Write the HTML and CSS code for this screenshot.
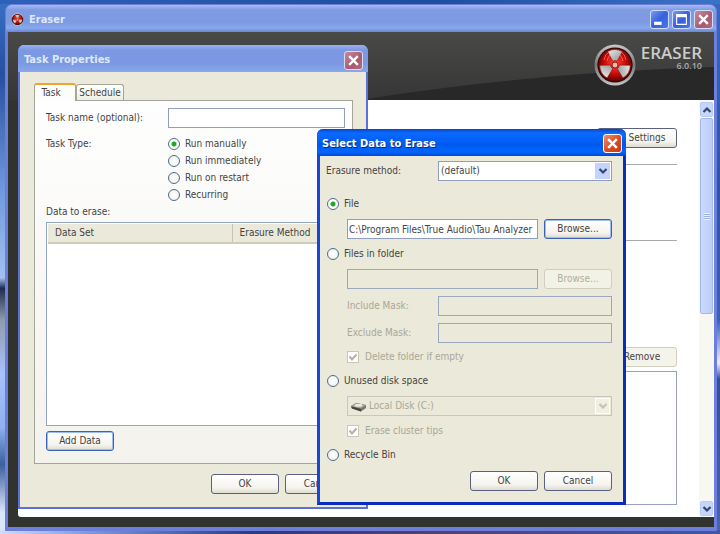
FILE: index.html
```html
<!DOCTYPE html>
<html lang="en">
<head>
<meta charset="utf-8">
<title>Eraser</title>
<link rel="stylesheet" href="styles.css">
</head>
<body>
<svg class="defs" aria-hidden="true">
  <defs>
    <radialGradient id="red" cx="50%" cy="45%" r="55%"><stop offset="0" stop-color="#ff4a35"/><stop offset=".55" stop-color="#d00d0a"/><stop offset="1" stop-color="#5a0000"/></radialGradient>
    <linearGradient id="rim" x1="0" y1="0" x2="0" y2="1"><stop offset="0" stop-color="#c9c9c9"/><stop offset=".5" stop-color="#777"/><stop offset="1" stop-color="#c4c4c4"/></linearGradient>
    <linearGradient id="steel" x1="0" y1="0" x2="1" y2="1"><stop offset="0" stop-color="#f0f0ee"/><stop offset="1" stop-color="#8b8d8b"/></linearGradient>
    <symbol id="emblem" viewBox="0 0 42 42">
      <circle cx="21" cy="21" r="20.5" fill="url(#rim)"/>
      <circle cx="21" cy="21" r="17.6" fill="#2a0505"/>
      <circle cx="21" cy="21" r="16.6" fill="url(#red)"/>
      <g fill="url(#steel)" stroke="#8a1010" stroke-width=".6">
        <path id="blade" d="M18.8 17.2 13.6 7.6Q21 3.4 28.4 7.6L23.2 17.2Q21 16 18.8 17.2Z"/>
        <use href="#blade" transform="rotate(120 21 21)"/>
        <use href="#blade" transform="rotate(240 21 21)"/>
      </g>
      <circle cx="21" cy="21" r="3" fill="#e9b9b0" stroke="#b01010"/>
      <path d="M10 16q1-6 5-8M32 16q-1-6-5-8M13 17q1-4 3-6M29 17q-1-4-3-6" fill="none" stroke="#ff8070" stroke-width="1" opacity=".7"/>
    </symbol>
    <symbol id="cross" viewBox="0 0 12 12"><path d="M2 2 10 10M10 2 2 10" stroke="#fff" stroke-width="2.2" fill="none"/></symbol>
    <symbol id="chevron" viewBox="0 0 10 10"><path d="M1.5 3 5 6.5 8.5 3" stroke="currentColor" stroke-width="2.2" fill="none"/></symbol>
  </defs>
</svg>

<main class="window main-window">
  <header class="titlebar">
    <svg class="app-icon" aria-hidden="true"><use href="#emblem"/></svg>
    <h1>Eraser</h1>
    <div class="controls">
      <button class="ctl" aria-label="Minimize"><svg viewBox="0 0 12 12"><path d="M1 8h7v3H1z" fill="#fff"/></svg></button>
      <button class="ctl" aria-label="Maximize"><svg viewBox="0 0 12 12"><path d="M1 1h10v10H1zM2 4v6h8V4z" fill="#fff" fill-rule="evenodd"/></svg></button>
      <button class="ctl close" aria-label="Close"><svg><use href="#cross"/></svg></button>
    </div>
  </header>
  <div class="frame">
    <div class="banner">
      <svg class="sheen" viewBox="0 0 705 68" preserveAspectRatio="none" aria-hidden="true"><path d="M350 68Q530 40 705 35V68Z" fill="#282828"/></svg>
      <svg class="logo" aria-hidden="true"><use href="#emblem"/></svg>
      <div class="brand"><strong>ERASER</strong><span>6.0.10</span></div>
    </div>
    <div class="page">
      <div class="page-content">
        <button class="btn settings">Settings</button>
        <hr class="rule-one">
        <hr class="rule-two">
        <button class="btn remove">Remove</button>
        <div class="file-list"></div>
      </div>
      <div class="scrollbar">
        <button class="scroll-btn" aria-label="Scroll up"><svg class="up"><use href="#chevron"/></svg></button>
        <div class="thumb"><i></i></div>
        <button class="scroll-btn" aria-label="Scroll down"><svg><use href="#chevron"/></svg></button>
      </div>
    </div>
  </div>
</main>

<section class="window task-window">
  <header class="titlebar">
    <h2>Task Properties</h2>
    <div class="controls"><button class="ctl close" aria-label="Close"><svg><use href="#cross"/></svg></button></div>
  </header>
  <div class="task-body">
    <div class="tabs">
      <button class="tab active">Task</button><button class="tab">Schedule</button>
    </div>
    <div class="panel">
      <div class="field">
        <label for="name">Task name (optional):</label>
        <input class="text" id="name" type="text">
      </div>
      <div class="field type">
        <span>Task Type:</span>
        <div class="radios">
          <label><input type="radio" name="type" checked>Run manually</label>
          <label><input type="radio" name="type">Run immediately</label>
          <label><input type="radio" name="type">Run on restart</label>
          <label><input type="radio" name="type">Recurring</label>
        </div>
      </div>
      <p class="list-label">Data to erase:</p>
      <div class="list">
        <table>
          <thead><tr><th class="col-set">Data Set</th><th>Erasure Method</th></tr></thead>
        </table>
      </div>
      <button class="btn focus add">Add Data</button>
    </div>
    <div class="actions"><button class="btn">OK</button><button class="btn">Cancel</button></div>
  </div>
</section>

<section class="window dialog">
  <header class="titlebar">
    <h2>Select Data to Erase</h2>
    <div class="controls"><button class="ctl close" aria-label="Close"><svg><use href="#cross"/></svg></button></div>
  </header>
  <form class="dialog-body">
    <div class="row">
      <label class="method" for="method">Erasure method:</label>
      <div class="select"><select id="method"><option>(default)</option></select><span class="arrow"><svg><use href="#chevron"/></svg></span></div>
    </div>
    <label class="row option file"><input type="radio" name="target" checked>File</label>
    <div class="row sub">
      <input class="text" type="text" aria-label="File path" value="C:\Program Files\True Audio\Tau Analyzer">
      <button class="btn focus" type="button">Browse...</button>
    </div>
    <label class="row option"><input type="radio" name="target">Files in folder</label>
    <div class="row sub">
      <input class="text" type="text" aria-label="Folder path" disabled>
      <button class="btn" type="button" disabled>Browse...</button>
    </div>
    <div class="row sub mask"><label for="include">Include Mask:</label><input class="text" id="include" type="text" disabled></div>
    <div class="row sub mask"><label for="exclude">Exclude Mask:</label><input class="text" id="exclude" type="text" disabled></div>
    <label class="row sub check tight"><input type="checkbox" checked disabled><svg viewBox="0 0 12 12"><path d="M2.5 5.5 5 8.5 9.5 3.5"/></svg>Delete folder if empty</label>
    <label class="row option tight"><input type="radio" name="target">Unused disk space</label>
    <div class="row sub">
      <div class="select off">
        <svg class="disk" viewBox="0 0 16 10" aria-hidden="true"><path d="M0 4 5 1 15 3V6L10 9.5 1 6.5Z" fill="#77756d"/><path d="M0 4 5 1 15 3 10 6.5Z" fill="#a5a39a"/><ellipse cx="7.5" cy="3.4" rx="4" ry="1.4" fill="#eceade"/><path d="M1 6.5 10 9.5V7L0 4.5Z" fill="#45433e"/></svg>
        <select aria-label="Drive" disabled><option>Local Disk (C:)</option></select><span class="arrow"><svg><use href="#chevron"/></svg></span>
      </div>
    </div>
    <label class="row sub check"><input type="checkbox" checked disabled><svg viewBox="0 0 12 12"><path d="M2.5 5.5 5 8.5 9.5 3.5"/></svg>Erase cluster tips</label>
    <label class="row option tight"><input type="radio" name="target">Recycle Bin</label>
    <div class="actions"><button class="btn" type="button">OK</button><button class="btn" type="button">Cancel</button></div>
  </form>
</section>
</body>
</html>
```
FILE: styles.css
```css
* { box-sizing: border-box; }

body {
  margin: 0;
  min-height: 100vh;
  padding: 4px 3px 3px 5px;
  display: flex;
  position: relative;
  overflow: hidden;
  font: 10px/14px "DejaVu Sans Condensed", "DejaVu Sans", sans-serif;
  color: #444;
  background:
    linear-gradient(90deg, #2c62b8, #1d4f9f 60%, #3a74c8) top / 100% 4px no-repeat,
    linear-gradient(90deg, #cfdcf6, #7f9ade 12%, #2b3a80 35%, #54406c 60%, #3f58a4) bottom / 100% 4px no-repeat,
    linear-gradient(#3a70c8, #274f9f 14%, #6f97dc 35%, #a3c0f2 52%, #1d2c50 54%, #8f9cae 60%, #a9c2fb 70%, #8fb0f2 80%, #3d5f9f 87%, #dce6fb 96%) left / 50% 100% no-repeat,
    linear-gradient(#3569bd, #2a55a4 35%, #3a62b4 60%, #eef 68%, #334f96 71%, #4a64ad) right / 50% 100% no-repeat;
}

button, input, select { font: inherit; color: inherit; margin: 0; padding: 0; }
h1, h2, p { margin: 0; }
svg { display: block; }
.defs { position: absolute; width: 0; height: 0; }

.window { display: flex; flex-direction: column; }

.titlebar { display: flex; align-items: center; flex: none; }

.titlebar h1, .titlebar h2 {
  font: bold 11px/16px "DejaVu Sans Condensed", "DejaVu Sans", sans-serif;
  color: #dce8fc;
}

.controls { margin-left: auto; display: flex; gap: 3px; }

.ctl {
  width: 19px;
  height: 19px;
  padding: 2px;
  border: 1px solid #d0defa;
  border-radius: 3px;
  background: linear-gradient(135deg, #7a9cf0, #3560dc 50%, #4a78e8);
}
.ctl svg { width: 13px; height: 13px; }
.ctl.close { background: linear-gradient(135deg, #c88a9a, #aa5a6e 60%, #b4697c); }

/* Main application window */
.main-window {
  flex: 1;
  border: 1px solid #6f7cdb;
  border-radius: 7px 7px 0 0;
  background: #6b7fdd;
  padding: 0 2px 3px;
}
.main-window .titlebar {
  height: 27px;
  padding: 2px 1px 0 5px;
  gap: 5px;
  border-radius: 6px 6px 0 0;
  margin: 0 -2px;
  background: linear-gradient(#a3bdf4, #7f9be2 18%, #7c9ae2 65%, #87a9ee 85%, #6d86d6);
}
.app-icon { width: 13px; height: 13px; }
.main-window .titlebar .controls { margin-right: 2px; }

.frame {
  flex: 1;
  display: flex;
  flex-direction: column;
  background: #31332f;
  padding-bottom: 10px;
}

.banner {
  height: 68px;
  flex: none;
  position: relative;
  display: flex;
  justify-content: flex-end;
  gap: 5px;
  padding: 12px 12px 0 0;
  background: linear-gradient(#494947, #363636);
}
.sheen { position: absolute; inset: 0; width: 100%; height: 100%; }
.logo { width: 42px; height: 42px; position: relative; }
.brand { position: relative; text-align: right; color: #ccc; }
.brand strong { display: block; font: 600 17px/18px "Open Sans", sans-serif; }
.brand span { display: block; font: 600 9px/8px "Open Sans", sans-serif; color: #aaa; }

.page { flex: 1; display: flex; margin-left: 10px; background: #fff; border-radius: 0 0 0 3px; }
.page-content {
  flex: 1;
  display: flex;
  flex-direction: column;
  align-items: flex-end;
  padding: 28px 22px 12px 24px;
}
.page-content hr { width: 100%; height: 1px; border: 0; margin: 0; background: #aaa; }
.page-content .settings { width: 80px; padding-left: 20px; }
.page-content .rule-one { margin-top: 16px; }
.page-content .rule-two { margin: 75px 0 106px; }
.page-content .remove { width: 80px; padding-left: 10px; border-color: #d0cfc0; background: #f5f4ea; flex: none; }
.file-list { flex: 1; width: 100%; margin-top: 4px; border: 1px solid #9aa0c4; }

.scrollbar { width: 15px; display: flex; flex-direction: column; padding: 2px 1px 1px; background: #f8f8f3; }
.scroll-btn {
  height: 15px;
  border: 1px solid #b8caf8;
  border-radius: 2px;
  background: #c6d5fc;
  color: #35476e;
  padding: 1px;
  display: grid;
  place-items: center;
  flex: none;
}
.scroll-btn svg { width: 10px; height: 10px; }
.scroll-btn .up { transform: rotate(180deg); }
.thumb {
  height: 196px;
  margin: 1px 0 auto;
  border: 1px solid #a3b8ee;
  border-radius: 2px;
  background: linear-gradient(90deg, #cbd9fd, #bdcefa);
  display: grid;
  place-items: center;
}
.thumb i { width: 6px; height: 7px; background: repeating-linear-gradient(#e8effe 0 1px, #9db3ea 1px 2px); }

/* Buttons and form controls */
.btn {
  width: 68px;
  height: 20px;
  border: 1px solid #5c6080;
  border-radius: 3px;
  background: linear-gradient(#fff, #f5f4ee 70%, #dedccf);
  white-space: nowrap;
}
.btn.focus { border-color: #3c62b4; box-shadow: inset 0 0 0 1px #9dbcf2; }
.btn:disabled { border-color: #d0cebf; background: #f3f2e6; color: #b0ae9e; }

.text {
  min-width: 0;
  height: 20px;
  border: 1px solid #8f9fbd;
  background: #fff;
  padding: 0 1px;
}
.text:disabled { background: #ebe9d9; border-color: #9ba8bc; }

input[type="radio"] {
  appearance: none;
  width: 12px;
  height: 12px;
  flex: none;
  border: 1px solid #4c6c8c;
  border-radius: 50%;
  background: radial-gradient(#fff, #eeeee8);
}
input[type="radio"]:checked { background: radial-gradient(#22a722 0 2px, #fff 3px); }

.select { flex: 1; position: relative; }
.select select {
  appearance: none;
  width: 100%;
  height: 20px;
  display: block;
  border: 1px solid #8f9fbd;
  border-radius: 0;
  background: #fff;
  padding: 0 20px 0 2px;
  opacity: 1;
}
.arrow {
  position: absolute;
  top: 2px;
  right: 2px;
  width: 15px;
  height: 16px;
  background: #c3d3fb;
  color: #35476e;
  display: grid;
  place-items: center;
  pointer-events: none;
}
.arrow svg { width: 10px; height: 10px; }
.select.off select { background: #ebe9d9; border-color: #c9c7b9; color: #a9a797; padding-left: 21px; }
.select.off .arrow { background: #f0efe4; color: #c4c2b3; border: 1px solid #fff; }
.disk { position: absolute; left: 4px; top: 6px; width: 16px; height: 10px; }

.actions { display: flex; justify-content: flex-end; gap: 6px; }

/* Task Properties */
.task-window {
  position: absolute;
  left: 18px;
  top: 45px;
  width: 350px;
  border: 2px solid #5b70d8;
  border-top: 0;
  border-radius: 6px 6px 0 0;
  background: #ebe9d9;
}
.task-window .titlebar {
  height: 27px;
  margin: 0 -2px;
  padding: 3px 5px 0 6px;
  border-radius: 6px 6px 0 0;
  background: linear-gradient(#98b0ee, #7c98e2 20%, #7c98e2 70%, #89a8ec);
}
.task-body { padding: 11px 13px 13px 14px; }
.tabs { display: flex; align-items: flex-end; }
.tab {
  height: 16px;
  width: 48px;
  border: 1px solid #a5a596;
  border-bottom: 0;
  border-radius: 3px 3px 0 0;
  background: linear-gradient(#fff, #eeede3);
}
.tab.active {
  width: 42px;
  height: 18px;
  padding: 0 8px 0 0;
  border-top: 2px solid #f0a32e;
  background: #fdfdfc;
  margin-bottom: -1px;
  position: relative;
}
.panel {
  border: 1px solid #a3a79b;
  background: linear-gradient(#fefefe, #f3f2ed);
  padding: 7px 7px 12px 11px;
}
.field { display: flex; }
.field > :first-child { width: 122px; flex: none; line-height: 20px; }
.field .text { flex: 1; }
.type { margin-top: 6px; }
.radios { display: grid; grid-auto-rows: 17px; padding-top: 1px; }
.radios label { display: flex; align-items: center; gap: 5px; }
.list-label { margin: 2px 0 3px; }
.list { height: 204px; border: 1px solid #92a5c4; background: #fff; padding: 1px; }
.list table { width: 100%; border-collapse: collapse; }
.list th {
  height: 19px;
  padding: 0 0 0 7px;
  font-weight: normal;
  text-align: left;
  background: #ebe9d9;
  border-bottom: 2px solid #cfccba;
}
.list .col-set { width: 184px; border-right: 1px solid #c5c3b3; }
.add { display: block; margin-top: 5px; }
.task-body .actions { margin-top: 10px; }

/* Select Data to Erase */
.dialog {
  position: absolute;
  left: 317px;
  top: 129px;
  width: 309px;
  border: 3px solid #0a2cc0;
  border-left-color: #1547dc;
  border-top: 0;
  border-radius: 6px 6px 0 0;
  background: #ebe9d9;
}
.dialog .titlebar {
  height: 27px;
  margin: 0 -3px;
  padding: 2px 4px 0 5px;
  border-radius: 6px 6px 0 0;
  background: linear-gradient(#0a46c8, #0a6aff 15%, #0059ee 60%, #0066ff 85%, #0048d4);
}
.dialog .titlebar h2 { color: #fff; text-shadow: 1px 1px #0a2a80; }
.dialog .ctl.close { border-color: #fff; background: linear-gradient(135deg, #f0906c, #dc4a20 55%, #c83c14); }
.dialog-body { padding: 5px 11px 11px 6px; }
.row { display: flex; align-items: center; height: 20px; margin-top: 5px; }
.row:first-child { margin-top: 0; }
.row.file { margin-top: 13px; }
.row.tight { margin-top: 4px; }
.row.option { gap: 5px; padding-left: 1px; }
.row.sub { padding-left: 21px; gap: 6px; }
.row.sub > .text { flex: 1; }
.row.sub > .btn { flex: none; }
.method { width: 112px; }
.row.mask { margin-top: 7px; gap: 0; color: #a9a797; }
.mask label { width: 91px; }
.check { color: #a9a797; position: relative; }
.check input { appearance: none; width: 12px; height: 12px; border: 1px solid #c9c7b9; background: #fff; }
.check svg { position: absolute; left: 21px; top: 4px; width: 12px; height: 12px; fill: none; stroke: #b3b1a2; stroke-width: 2; }
.dialog .actions { margin-top: 6px; }
```
